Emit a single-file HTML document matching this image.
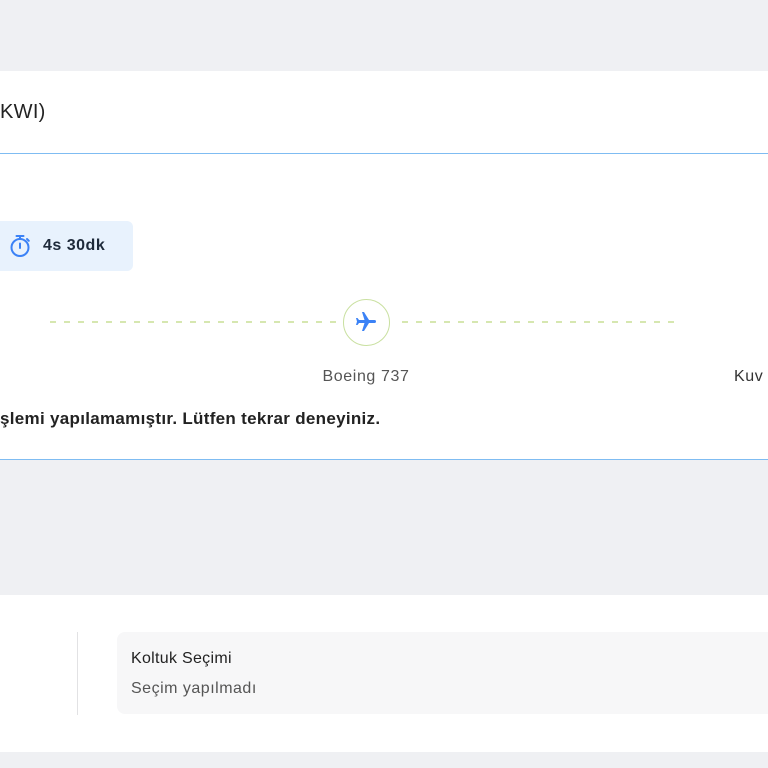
<!DOCTYPE html>
<html><head><meta charset="utf-8"><style>
*{margin:0;padding:0;box-sizing:border-box}
body{width:768px;height:768px;background:#eff0f3;position:relative;overflow:hidden;font-family:"Liberation Sans",sans-serif;color:#222}
.a{position:absolute;white-space:nowrap}
</style></head><body>
<div class="a" style="left:0;top:71px;width:768px;height:389px;background:#fff"></div>
<div class="a" style="left:0;top:153px;width:768px;height:1px;background:#7fbcf2"></div>
<div class="a" style="left:0;top:459px;width:768px;height:1px;background:#7fbcf2"></div>
<div class="a" style="left:0;top:100px;font-size:20px;line-height:24px;color:#222;letter-spacing:0.3px">KWI)</div>
<div class="a" style="left:-10px;top:221px;width:143px;height:50px;background:#e8f2fd;border-radius:6px"></div>
<svg class="a" style="left:9px;top:234px" width="22" height="24" viewBox="0 0 22 24"><circle cx="11" cy="13.5" r="8.5" fill="none" stroke="#3b82f6" stroke-width="2"/><path d="M7.5 2h7M11 2v3M11 9.5v4.5M18 5l1.8 1.8" stroke="#3b82f6" stroke-width="2" stroke-linecap="round"/></svg>
<div class="a" style="left:43px;top:237px;font-size:16px;font-weight:bold;color:#1e2a3a;letter-spacing:0.5px">4s 30dk</div>
<svg class="a" style="left:0;top:318px" width="768" height="8"><line x1="50" y1="4" x2="340" y2="4" stroke="#c8df95" stroke-width="1.5" stroke-dasharray="6 8"/><line x1="402" y1="4" x2="675" y2="4" stroke="#c8df95" stroke-width="1.5" stroke-dasharray="6 8"/></svg>
<div class="a" style="left:343px;top:299px;width:47px;height:47px;border:1.5px solid #c9e0a0;border-radius:50%;background:#fff"></div>
<svg class="a" style="left:354px;top:310px" width="24" height="24" viewBox="0 0 24 24"><path fill="#3b82f6" d="M21 16v-2l-8-5V3.5a1.5 1.5 0 0 0-3 0V9l-8 5v2l8-2.5V19l-2 1.5V22l3.5-1 3.5 1v-1.5L13 19v-5.5z" transform="rotate(90 12 12)"/></svg>
<div class="a" style="left:296px;top:368px;width:140px;text-align:center;font-size:16px;color:#555;letter-spacing:0.6px">Boeing 737</div>
<div class="a" style="left:734px;top:368px;font-size:16px;color:#333;letter-spacing:0.6px">Kuv</div>
<div class="a" style="left:0;top:409px;font-size:17px;font-weight:bold;color:#222;letter-spacing:0.3px">şlemi yapılamamıştır. Lütfen tekrar deneyiniz.</div>
<div class="a" style="left:0;top:595px;width:768px;height:157px;background:#fff"></div>
<div class="a" style="left:77px;top:632px;width:1px;height:83px;background:#e2e2e4"></div>
<div class="a" style="left:117px;top:632px;width:670px;height:82px;background:#f7f7f8;border-radius:8px"></div>
<div class="a" style="left:131px;top:650px;font-size:16px;color:#222;letter-spacing:0.3px">Koltuk Seçimi</div>
<div class="a" style="left:131px;top:680px;font-size:16px;color:#555;letter-spacing:0.5px">Seçim yapılmadı</div>
</body></html>
